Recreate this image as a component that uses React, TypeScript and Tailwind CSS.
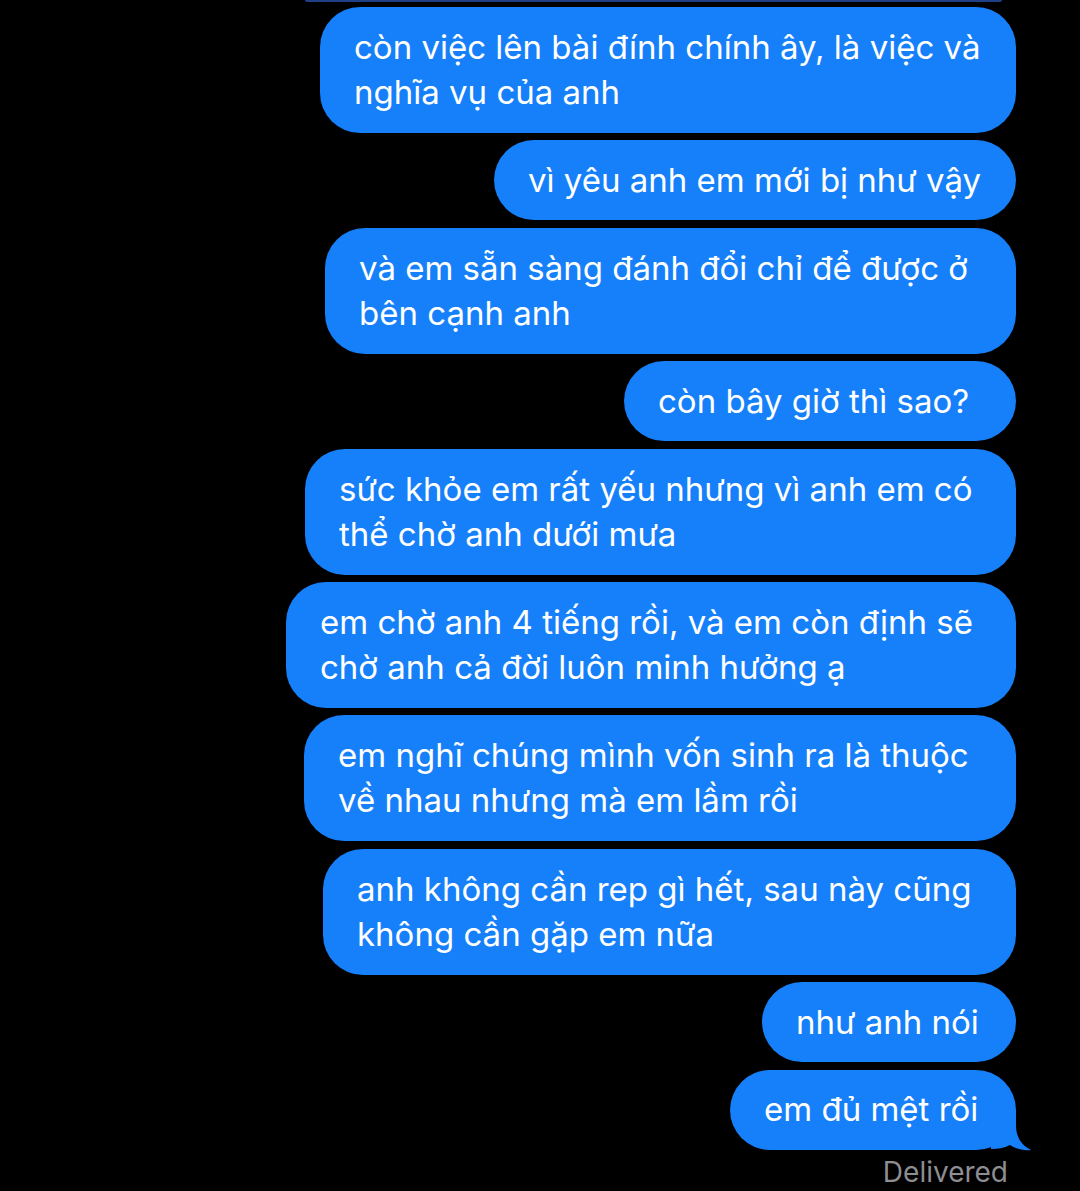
import React from "react";

type Msg = { lines: string[]; w: number };

const msgs: Msg[] = [
  { lines: ["còn việc lên bài đính chính ây, là việc và", "nghĩa vụ của anh"], w: 696 },
  { lines: ["vì yêu anh em mới bị như vậy"], w: 522 },
  { lines: ["và em sẵn sàng đánh đổi chỉ để được ở", "bên cạnh anh"], w: 691 },
  { lines: ["còn bây giờ thì sao?"], w: 392 },
  { lines: ["sức khỏe em rất yếu nhưng vì anh em có", "thể chờ anh dưới mưa"], w: 711 },
  { lines: ["em chờ anh 4 tiếng rồi, và em còn định sẽ", "chờ anh cả đời luôn minh hưởng ạ"], w: 730 },
  { lines: ["em nghĩ chúng mình vốn sinh ra là thuộc", "về nhau nhưng mà em lầm rồi"], w: 712 },
  { lines: ["anh không cần rep gì hết, sau này cũng", "không cần gặp em nữa"], w: 693 },
  { lines: ["như anh nói"], w: 254 },
  { lines: ["em đủ mệt rồi"], w: 286 },
];

function Bubble({ m, tail }: { m: Msg; tail?: boolean }) {
  const two = m.lines.length > 1;
  return (
    <div
      className={
        "relative rounded-[40px] bg-[#167ffa] pl-[34px] text-white whitespace-nowrap text-[33px] leading-[45px] " +
        (two ? "py-[18px]" : "py-[17.5px]")
      }
      style={{ width: m.w }}
    >
      {m.lines.map((l, i) => (
        <div key={i} className="relative">
          {l}
        </div>
      ))}
      {tail && (
        <svg
          className="absolute right-[-15px] bottom-[-1px]"
          width="40"
          height="42"
          viewBox="0 0 40 42"
        >
          <path
            d="M25 0 L25 16 C25 28 30 36 40 41 C33 42 25 40 19 36 C13 39 7 40 0 40 L0 0 Z"
            fill="#167ffa"
          />
        </svg>
      )}
    </div>
  );
}

export default function App() {
  return (
    <div
      className="h-[1191px] w-[1080px] overflow-hidden bg-black"
      style={{ fontFamily: "Inter, 'Noto Sans', sans-serif" }}
    >
      <div className="flex flex-col items-end pr-[64px]">
        <div className="mr-[14px] h-[2px] w-[697px] rounded-b-full bg-[#1f3f86]" />
        <div className="mt-[5px] flex flex-col items-end gap-[7.4px]">
          {msgs.map((m, i) => (
            <Bubble key={i} m={m} tail={i === msgs.length - 1} />
          ))}
        </div>
        <div className="mr-[8px] mt-[5px] text-[28px] leading-[34px] text-[#8d8d92]">
          Delivered
        </div>
      </div>
    </div>
  );
}
